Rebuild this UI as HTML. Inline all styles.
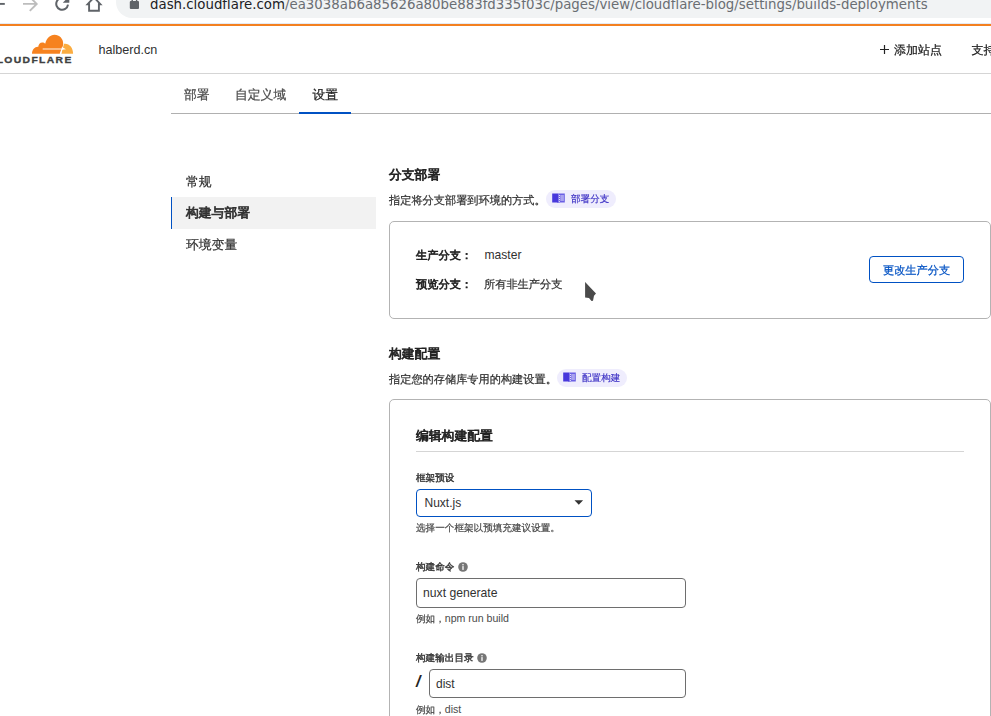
<!DOCTYPE html>
<html lang="zh-CN">
<head>
<meta charset="utf-8">
<title>Cloudflare Pages</title>
<style>
*{box-sizing:border-box;margin:0;padding:0}
html,body{width:991px;height:716px;overflow:hidden;background:#fff}
body{position:relative;font-family:"Liberation Sans","WenQuanYi Zen Hei",sans-serif;color:#313131;font-size:12.8px;-webkit-text-stroke:0.22px currentColor}
.abs{position:absolute;white-space:nowrap}
.b{-webkit-text-stroke:0.056em currentColor;color:#222}
/* browser chrome */
#pill{left:116px;top:-14px;width:900px;height:32px;border-radius:16px;background:#f1f3f4}
#url{left:150px;top:-4px;-webkit-text-stroke:0 transparent;font-family:"DejaVu Sans","Liberation Sans",sans-serif;font-size:13.333px;line-height:18px;color:#6a6e73}
#url span{color:#202124}
#orange{left:0;top:24px;width:991px;height:2px;background:#f38020}
/* header */
#hdrline{left:0;top:73px;width:991px;height:1px;background:#d5d5d5}
#site{left:98.500px;top:41px;font-size:12.600px;line-height:18px;color:#313131}
#addsite{left:894px;top:41px;font-size:12px;line-height:18px;color:#222}
#support{left:971.500px;top:41px;font-size:12px;line-height:18px;color:#222}
#cf{right:918.500px;top:54px;font-size:8.600px;line-height:12px;font-weight:bold;letter-spacing:1.150px;color:#404041;transform:scaleX(1.2);transform-origin:100% 50%;-webkit-text-stroke:0.3px #404041}
/* tabs */
.tab{top:86px;font-size:12.800px;line-height:18px;color:#4a4a4a}
#tabline{left:171px;top:113px;width:820px;height:1px;background:#b0b0b0}
#tabsel{left:299px;top:112px;width:52px;height:2px;background:#0051c3}
/* sidebar */
.side{left:186px;font-size:12.800px;line-height:18px;color:#313131}
#sideact{left:171px;top:197px;width:205px;height:32px;background:#f2f2f2;border-left:1.500px solid #0051c3}
/* main */
.h2{left:389px;font-size:12.800px;line-height:18px}
.desc{left:389px;font-size:11.200px;line-height:16px;color:#313131}
.pill{width:70px;height:18px;border-radius:9px;background:#efedfd;color:#3a2ec4;font-size:9.600px;line-height:18px;padding-left:25px;-webkit-text-stroke:0.150px currentColor}
.card{left:389px;width:602px;border:1px solid #b3b3b3;border-radius:5px;background:#fff}
.lbl{font-size:11.200px;line-height:16px;letter-spacing:0.080px}
.val{font-size:11.200px;line-height:16px;color:#313131}
.btn{left:869px;top:256px;width:95px;height:27px;border:1px solid #0051c3;border-radius:4px;color:#0051c3;font-size:11.200px;line-height:27px;text-align:center}
.flabel{left:416px;font-size:9.600px;line-height:14px}
.flabel.b{-webkit-text-stroke:0.420px currentColor;color:#3a3a3a}
.hint{left:416px;font-size:9.600px;line-height:14px;color:#4a4a4a}
.input{border:1px solid #6e6e6e;border-radius:4px;height:29px;font-size:12.200px;line-height:27px;color:#313131;padding-left:6px;background:#fff}
.lat{font-family:"Liberation Sans",sans-serif;-webkit-text-stroke:0 transparent}
.hl{font-size:10.600px;line-height:0}
</style>
</head>
<body>
<!-- browser bar -->
<div class="abs" id="pill"></div>
<svg class="abs" style="left:0;top:0" width="150" height="20" viewBox="0 0 150 20" fill="none">
  <path d="M0 3.900H4.800" stroke="#5f6368" stroke-width="1.900"/>
  <path d="M23 3.900H35.500M29.800 -3L36.700 3.900L29.800 10.800" stroke="#bdbdbd" stroke-width="1.900"/>
  <path d="M66.200 -0.400A5.900 5.900 0 1 0 68 4.700" stroke="#5f6368" stroke-width="2"/>
  <path d="M69.300 -4V2.800H62.800Z" fill="#5f6368"/>
  <path d="M89.100 10.800V4.200H87.600L94 -2.600L100.400 4.200H98.900V10.800Z" stroke="#5f6368" stroke-width="1.900"/>
  <rect x="129.800" y="1" width="9.200" height="8.100" rx="1" fill="#5f6368"/>
  <path d="M132.200 1V-2H136.600V1" stroke="#5f6368" stroke-width="1.400"/>
</svg>
<div class="abs" id="url"><span>dash.cloudflare.com</span>/ea3038ab6a85626a80be883fd335f03c/pages/view/cloudflare-blog/settings/builds-deployments</div>
<div class="abs" style="left:0;top:23px;width:991px;height:1px;background:#e4eaf4"></div>
<div class="abs" id="orange"></div>

<!-- header -->
<svg class="abs" style="left:30px;top:33px" width="46" height="22" viewBox="30 33 46 22">
  <path d="M32 53.700C32 49.500 35 46.500 38.300 46.800C38.300 44 40.500 42 43 42.500C43.500 42.600 44.500 43 45.200 43.700C46.500 38.500 50 34.800 54.500 34.800C59.500 34.800 63.200 38.800 63.200 43.500C63.200 45 62.900 46.300 62.400 47.300L60 53.700Z" fill="#f6821f"/>
  <path d="M61.200 53.700L63 47.500L64 43.800C69 43 73.100 47.500 73.100 53.700Z" fill="#fbad41"/>
  <path d="M42.700 49H61.500" stroke="#fff" stroke-width="0.9"/>
  <path d="M59.700 53.900L62 47L66 49.300L62.300 49.800L61.200 53.900Z" fill="#fff"/>
</svg>
<div class="abs" id="cf">CLOUDFLARE</div>
<div class="abs lat" id="site">halberd.cn</div>
<svg class="abs" style="left:880px;top:45px" width="9" height="9" viewBox="0 0 9 9"><path d="M4.500 0V9M0 4.500H9" stroke="#222" stroke-width="1.200"/></svg>
<div class="abs" id="addsite">添加站点</div>
<div class="abs" id="support">支持</div>
<div class="abs" id="hdrline"></div>

<!-- tabs -->
<div class="abs tab" style="left:184px">部署</div>
<div class="abs tab" style="left:235px">自定义域</div>
<div class="abs tab" style="left:312.500px;color:#222">设置</div>
<div class="abs" id="tabline"></div>
<div class="abs" id="tabsel"></div>

<!-- sidebar -->
<div class="abs" id="sideact"></div>
<div class="abs side" style="top:173px">常规</div>
<div class="abs side b" style="top:204px">构建与部署</div>
<div class="abs side" style="top:236px">环境变量</div>

<!-- section 1 -->
<div class="abs h2 b" style="top:166px">分支部署</div>
<div class="abs desc" style="top:192px">指定将分支部署到环境的方式。</div>
<div class="abs pill" style="left:546px;top:190px">部署分支</div>
<svg class="abs" style="left:552.1px;top:193px" width="14" height="11" viewBox="0 0 14 11"><path d="M0.200 0.600H6.400V10.100L4.800 9.500H0.200Z" fill="#4838dc"/><path d="M6.400 0.600H12.800V9.500H8L6.400 10.100Z" fill="#6a5fe4"/><rect x="8.300" y="2" width="3.600" height="6" fill="#a9a2ef"/><rect x="7" y="2" width="0.900" height="0.900" fill="#fff"/><rect x="7" y="4" width="0.900" height="0.900" fill="#fff"/><rect x="7" y="6" width="0.900" height="0.900" fill="#fff"/><rect x="7" y="7.900" width="0.900" height="0.900" fill="#fff"/></svg>
<div class="abs card" style="top:221px;height:98px"></div>
<div class="abs lbl b" style="left:416px;top:247px">生产分支：</div>
<div class="abs val lat" style="left:484.500px;top:247px;font-size:12.100px">master</div>
<div class="abs lbl b" style="left:416px;top:276px">预览分支：</div>
<div class="abs val" style="left:484px;top:276px">所有非生产分支</div>
<div class="abs btn">更改生产分支</div>

<!-- section 2 -->
<div class="abs h2 b" style="top:345px">构建配置</div>
<div class="abs desc" style="top:371px">指定您的存储库专用的构建设置。</div>
<div class="abs pill" style="left:557px;top:369px">配置构建</div>
<svg class="abs" style="left:563.1px;top:372px" width="14" height="11" viewBox="0 0 14 11"><path d="M0.200 0.600H6.400V10.100L4.800 9.500H0.200Z" fill="#4838dc"/><path d="M6.400 0.600H12.800V9.500H8L6.400 10.100Z" fill="#6a5fe4"/><rect x="8.300" y="2" width="3.600" height="6" fill="#a9a2ef"/><rect x="7" y="2" width="0.900" height="0.900" fill="#fff"/><rect x="7" y="4" width="0.900" height="0.900" fill="#fff"/><rect x="7" y="6" width="0.900" height="0.900" fill="#fff"/><rect x="7" y="7.900" width="0.900" height="0.900" fill="#fff"/></svg>
<div class="abs card" style="top:399px;height:340px"></div>
<div class="abs b" style="left:416px;top:427px;font-size:12.800px;line-height:18px">编辑构建配置</div>
<div class="abs" style="left:416px;top:451px;width:548px;height:1px;background:#d5d5d5"></div>

<div class="abs flabel b" style="top:471px">框架预设</div>
<div class="abs input lat" style="left:416px;top:489px;width:176px;height:28px;border:1.400px solid #0051c3;padding-left:7.500px;font-size:12px;line-height:27px">Nuxt.js</div>
<svg class="abs" style="left:574px;top:499.500px" width="10" height="6" viewBox="0 0 10 6"><path d="M0.500 0.300H9.100L4.800 4.700Z" fill="#333"/></svg>
<div class="abs hint" style="top:521px">选择一个框架以预填充建议设置。</div>

<div class="abs flabel b" style="top:560px">构建命令</div>
<svg class="abs" style="left:457.6px;top:562.4px" width="10" height="10" viewBox="0 0 10 10"><circle cx="5" cy="5" r="4.800" fill="#767676"/><rect x="4.350" y="4.100" width="1.300" height="3.800" fill="#fff"/><circle cx="5" cy="2.700" r="0.800" fill="#fff"/></svg>
<div class="abs input lat" style="left:416px;top:578px;width:270px;height:30px;line-height:29px">nuxt generate</div>
<div class="abs hint" style="top:612px">例如，<span class="lat hl">npm run build</span></div>

<div class="abs flabel b" style="top:651px">构建输出目录</div>
<svg class="abs" style="left:477px;top:653.4px" width="10" height="10" viewBox="0 0 10 10"><circle cx="5" cy="5" r="4.800" fill="#767676"/><rect x="4.350" y="4.100" width="1.300" height="3.800" fill="#fff"/><circle cx="5" cy="2.700" r="0.800" fill="#fff"/></svg>
<div class="abs lat" style="left:416px;top:673px;font-size:16px;line-height:18px;font-weight:bold;font-style:italic;color:#222">/</div>
<div class="abs input lat" style="left:429px;top:669px;width:257px;font-size:12px;line-height:29px">dist</div>
<div class="abs hint" style="top:703px">例如，<span class="lat hl">dist</span></div>

<!-- mouse cursor -->
<svg class="abs" style="left:580px;top:277px" width="22" height="28" viewBox="580 277 22 28">
  <path d="M585.100 282.100L596 293.400L594 295.700L593 300.800L591.500 301L589 297.900L585.100 297.600Z" fill="#4a4a4a" stroke="#fff" stroke-width="1.600" stroke-linejoin="round" paint-order="stroke"/>
</svg>
</body>
</html>
